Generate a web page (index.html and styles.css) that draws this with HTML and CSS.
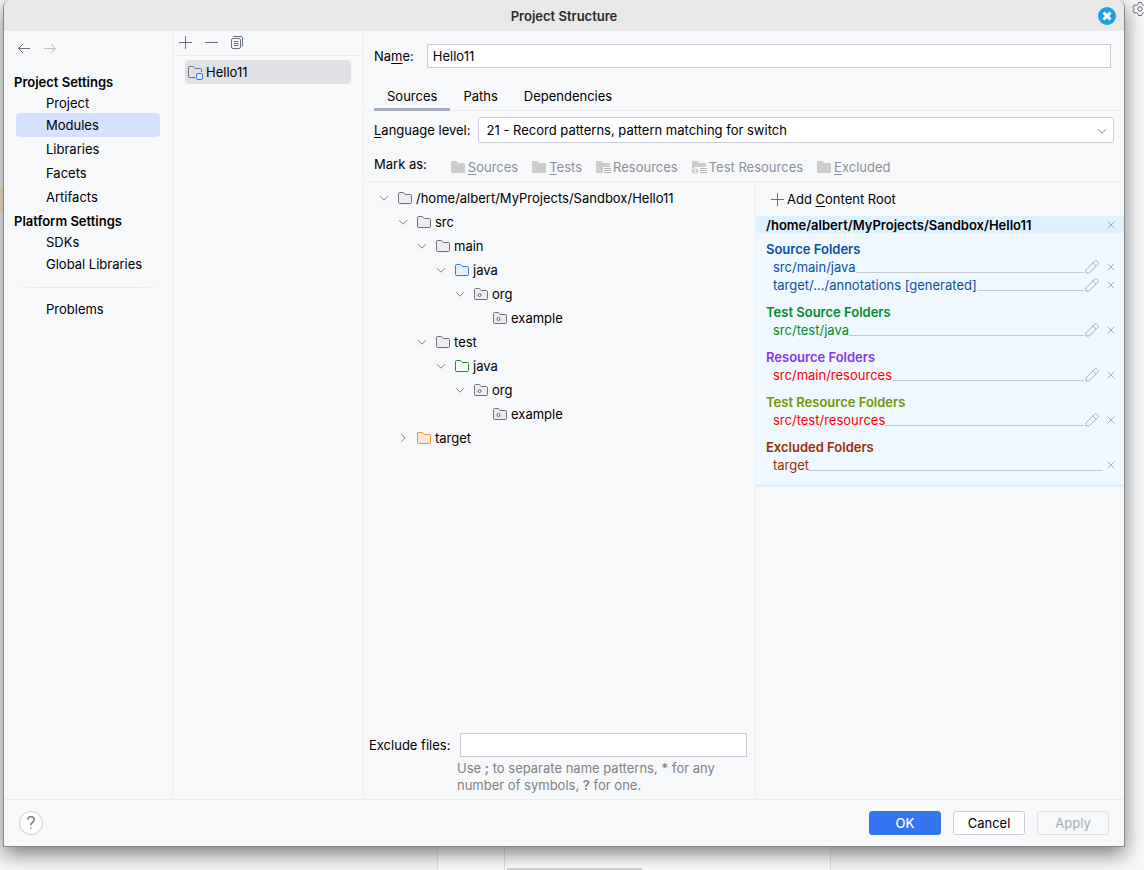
FILE: index.html
```html
<!DOCTYPE html>
<html lang="en">
<head>
    <meta charset="UTF-8">
    <meta name="viewport" content="width=device-width, initial-scale=1.0">
    <title>Project Structure</title>
    <link rel="stylesheet" href="styles.css">
</head>
<body>

<!-- icon set -->
<svg class="sprite" aria-hidden="true">
    <symbol id="folder" viewBox="0 0 16 16">
        <path d="M8.1 4.35l.15.15H13.4c.7 0 1.1.4 1.1 1.1v6.8c0 .7-.4 1.1-1.1 1.1H2.6c-.7 0-1.1-.4-1.1-1.1V3.6c0-.7.4-1.1 1.1-1.1h3.5c.2 0 .3.05.4.16z"/>
    </symbol>
    <symbol id="package" viewBox="0 0 16 16">
        <use href="#folder"/>
        <circle cx="6.5" cy="9" r="1.5"/>
    </symbol>
    <symbol id="folder-solid" viewBox="0 0 16 16">
        <path d="M8.1 4H14q1 0 1 1v8q0 1-1 1H2q-1 0-1-1V3q0-1 1-1h4.2z"/>
    </symbol>
    <symbol id="folder-res" viewBox="0 0 16 16">
        <path d="M8.1 4H14q1 0 1 1v3H8v6H2q-1 0-1-1V3q0-1 1-1h4.2z"/>
        <path class="line" d="M9 9.5h7M9 11.5h7M9 13.5h7"/>
    </symbol>
    <symbol id="folder-testres" viewBox="0 0 16 16">
        <path d="M8.1 4H14q1 0 1 1v3H7L4 8 1 10V3q0-1 1-1h4.2z"/>
        <path d="M3.5 9v6Q.5 14 .5 12t3-3zM4.5 9v6q3-1 3-3t-3-3z"/>
        <path class="line" d="M9 9.5h7M9 11.5h7M9 13.5h7"/>
    </symbol>
    <symbol id="chevron" viewBox="0 0 16 16"><path d="M4 6.2l4 4 4-4"/></symbol>
    <symbol id="plus" viewBox="0 0 16 16"><path d="M8.5 2v13M2 8.5h13"/></symbol>
    <symbol id="cross" viewBox="0 0 16 16"><path d="M4.5 4.5l7 7M11.5 4.5l-7 7"/></symbol>
    <symbol id="pencil" viewBox="0 0 16 16">
        <path d="M2 14v-3.2L10.8 2q.9-.8 1.8 0l1.4 1.4q.8.9 0 1.8L5.2 14zM8.8 4l3.2 3.2"/>
    </symbol>
</svg>

<div class="edge-left"></div>

<div class="dialog">
    <div class="titlebar">
        <h1>Project Structure</h1>
        <button class="close" aria-label="Close">
            <svg viewBox="0 0 18 18"><circle cx="9" cy="9" r="9"/><path d="M5.5 5.5l7 7M12.5 5.5l-7 7"/></svg>
        </button>
    </div>

    <div class="content">
        <nav class="sidebar">
            <div class="history">
                <button aria-label="Back"><svg class="icon" viewBox="0 0 16 16"><path d="M14 8.5H2.5M7 4L2.5 8.5 7 13"/></svg></button>
                <button aria-label="Forward" disabled><svg class="icon" viewBox="0 0 16 16"><path d="M2 8.5h11.5M9 4l4.5 4.500L9 13"/></svg></button>
            </div>
            <h2>Project Settings</h2>
            <a href="#" class="first">Project</a>
            <a href="#" class="selected">Modules</a>
            <a href="#">Libraries</a>
            <a href="#">Facets</a>
            <a href="#">Artifacts</a>
            <h2>Platform Settings</h2>
            <a href="#" class="first">SDKs</a>
            <a href="#">Global Libraries</a>
            <hr>
            <a href="#">Problems</a>
        </nav>

        <div class="modules">
            <div class="toolbar">
                <button aria-label="Add"><svg class="icon"><use href="#plus"/></svg></button>
                <button aria-label="Remove"><svg class="icon" viewBox="0 0 16 16"><path d="M2 8.5h13"/></svg></button>
                <button aria-label="Copy">
                    <svg class="icon" viewBox="0 0 16 16">
                        <rect x="2.5" y="4.5" width="9" height="10" rx="1.5"/>
                        <path d="M4.5 2.5H12q1.5 0 1.5 1.5v8.5M5 7.5h4.500M5 9.5h4.500M5 11.5h4.500"/>
                    </svg>
                </button>
            </div>
            <a href="#" class="module">
                <svg class="icon" viewBox="0 0 16 16">
                    <path d="M8 13.5H2.6q-1.1 0-1.1-1.1V3.6q0-1.1 1.1-1.1h3.5l2 2h5.3q1.1 0 1.1 1.1V8"/>
                    <rect class="badge" x="9.5" y="9.5" width="6" height="6" rx="1.5"/>
                </svg>
                Hello11
            </a>
        </div>

        <div class="editor">
            <div class="name-row">
                <label for="name">Na<u>m</u>e:</label>
                <input type="text" id="name" value="Hello11">
            </div>
            <div class="tabs" role="tablist">
                <button role="tab" class="active" aria-selected="true">Sources</button>
                <button role="tab">Paths</button>
                <button role="tab">Dependencies</button>
            </div>
            <div class="level-row">
                <label for="level"><u>L</u>anguage level:</label>
                <div class="combo">
                    <select id="level">
                        <option>21 - Record patterns, pattern matching for switch</option>
                    </select>
                    <svg class="icon"><use href="#chevron"/></svg>
                </div>
            </div>
            <div class="mark-row">
                <span>Mark as:</span>
                <div class="marks">
                    <button disabled><svg class="icon"><use href="#folder-solid"/></svg><span><u>S</u>ources</span></button>
                    <button disabled><svg class="icon"><use href="#folder-solid"/></svg><span><u>T</u>ests</span></button>
                    <button disabled><svg class="icon"><use href="#folder-res"/></svg><span>Resources</span></button>
                    <button disabled><svg class="icon"><use href="#folder-testres"/></svg><span>Test Resources</span></button>
                    <button disabled><svg class="icon"><use href="#folder-solid"/></svg><span><u>E</u>xcluded</span></button>
                </div>
            </div>

            <div class="split">
                <div class="tree-pane">
                    <ul class="tree">
                        <li><div class="node"><svg class="icon arrow"><use href="#chevron"/></svg><svg class="icon"><use href="#folder"/></svg>/home/albert/MyProjects/Sandbox/Hello11</div>
                            <ul>
                                <li><div class="node"><svg class="icon arrow"><use href="#chevron"/></svg><svg class="icon"><use href="#folder"/></svg>src</div>
                                    <ul>
                                        <li><div class="node"><svg class="icon arrow"><use href="#chevron"/></svg><svg class="icon"><use href="#folder"/></svg>main</div>
                                            <ul>
                                                <li><div class="node"><svg class="icon arrow"><use href="#chevron"/></svg><svg class="icon blue"><use href="#folder"/></svg>java</div>
                                                    <ul>
                                                        <li><div class="node"><svg class="icon arrow"><use href="#chevron"/></svg><svg class="icon"><use href="#package"/></svg>org</div>
                                                            <ul>
                                                                <li><div class="node leaf"><svg class="icon"><use href="#package"/></svg>example</div></li>
                                                            </ul>
                                                        </li>
                                                    </ul>
                                                </li>
                                            </ul>
                                        </li>
                                        <li><div class="node"><svg class="icon arrow"><use href="#chevron"/></svg><svg class="icon"><use href="#folder"/></svg>test</div>
                                            <ul>
                                                <li><div class="node"><svg class="icon arrow"><use href="#chevron"/></svg><svg class="icon green"><use href="#folder"/></svg>java</div>
                                                    <ul>
                                                        <li><div class="node"><svg class="icon arrow"><use href="#chevron"/></svg><svg class="icon"><use href="#package"/></svg>org</div>
                                                            <ul>
                                                                <li><div class="node leaf"><svg class="icon"><use href="#package"/></svg>example</div></li>
                                                            </ul>
                                                        </li>
                                                    </ul>
                                                </li>
                                            </ul>
                                        </li>
                                    </ul>
                                </li>
                                <li><div class="node"><svg class="icon arrow closed"><use href="#chevron"/></svg><svg class="icon orange"><use href="#folder"/></svg>target</div></li>
                            </ul>
                        </li>
                    </ul>
                    <div class="exclude">
                        <label for="exclude">Exclude files:</label>
                        <input type="text" id="exclude">
                    </div>
                    <p class="hint">Use <b>;</b> to separate name patterns, <b>*</b> for any number of symbols, <b>?</b> for one.</p>
                </div>

                <div class="roots">
                    <button class="add-root"><svg class="icon"><use href="#plus"/></svg><span>Add <u>C</u>ontent Root</span></button>
                    <div class="root-title">
                        <h3>/home/albert/MyProjects/Sandbox/Hello11</h3>
                        <button aria-label="Remove content root"><svg class="icon"><use href="#cross"/></svg></button>
                    </div>
                    <div class="root-body">
                        <section class="sources">
                            <h4>Source Folders</h4>
                            <div class="entry">src/main/java<i></i>
                                <button aria-label="Edit"><svg class="icon"><use href="#pencil"/></svg></button>
                                <button aria-label="Remove"><svg class="icon"><use href="#cross"/></svg></button>
                            </div>
                            <div class="entry">target/.../annotations [generated]<i></i>
                                <button aria-label="Edit"><svg class="icon"><use href="#pencil"/></svg></button>
                                <button aria-label="Remove"><svg class="icon"><use href="#cross"/></svg></button>
                            </div>
                        </section>
                        <section class="tests">
                            <h4>Test Source Folders</h4>
                            <div class="entry">src/test/java<i></i>
                                <button aria-label="Edit"><svg class="icon"><use href="#pencil"/></svg></button>
                                <button aria-label="Remove"><svg class="icon"><use href="#cross"/></svg></button>
                            </div>
                        </section>
                        <section class="resources">
                            <h4>Resource Folders</h4>
                            <div class="entry missing">src/main/resources<i></i>
                                <button aria-label="Edit"><svg class="icon"><use href="#pencil"/></svg></button>
                                <button aria-label="Remove"><svg class="icon"><use href="#cross"/></svg></button>
                            </div>
                        </section>
                        <section class="test-resources">
                            <h4>Test Resource Folders</h4>
                            <div class="entry missing">src/test/resources<i></i>
                                <button aria-label="Edit"><svg class="icon"><use href="#pencil"/></svg></button>
                                <button aria-label="Remove"><svg class="icon"><use href="#cross"/></svg></button>
                            </div>
                        </section>
                        <section class="excluded">
                            <h4>Excluded Folders</h4>
                            <div class="entry">target<i></i>
                                <button aria-label="Remove"><svg class="icon"><use href="#cross"/></svg></button>
                            </div>
                        </section>
                    </div>
                </div>
            </div>
        </div>
    </div>

    <div class="footer">
        <button class="help" aria-label="Help">
            <svg viewBox="0 0 24 24"><path d="M8.5 8.5q0-3.5 3.5-3.5t3.5 3.3c0 3-3.8 3-3.8 6.2M11.7 17v1.2"/></svg>
        </button>
        <button class="btn primary">OK</button>
        <button class="btn">Cancel</button>
        <button class="btn" disabled>Apply</button>
    </div>
</div>

<div class="edge-right">
    <svg class="icon" viewBox="0 0 16 16">
        <path d="M6.5 1.5h3l.6 2 1.5.9 2-.5 1.5 2.6-1.5 1.5 1.5 1.5-1.5 2.6-2-.5-1.5.9-.6 2h-3l-.6-2-1.5-.9-2 .5L.9 9.5 2.4 8 .9 6.5l1.5-2.6 2 .5 1.5-.9z"/>
        <circle cx="8" cy="8" r="2.2"/>
    </svg>
</div>

<!-- the IDE window that shows below the dialog -->
<div class="backdrop">
    <div></div>
    <div class="gutter"></div>
    <div class="code"><span></span></div>
    <div></div>
</div>

</body>
</html>
```
FILE: styles.css
```css
* {
    box-sizing: border-box;
}

body {
    margin: 0;
    min-height: 100vh;
    display: grid;
    grid-template-columns: 3px 1fr 19px;
    grid-template-rows: 1fr 23px;
    overflow: hidden;
    background: #f7f8fa;
    color: #000;
    font-family: Inter, "Liberation Sans", sans-serif;
    font-size: 13px;
    line-height: 18px;
}

h1, h2, h3, h4, p, ul {
    margin: 0;
    padding: 0;
    font-size: 13px;
}

h1, h2, h3, h4, b {
    font-weight: 600;
}

ul {
    list-style: none;
}

a {
    color: inherit;
    text-decoration: none;
}

u {
    text-underline-offset: 2px;
}

button {
    margin: 0;
    padding: 0;
    border: 0;
    background: none;
    color: inherit;
    font: inherit;
}

input, select {
    min-width: 0;
    margin: 0;
    border: 1px solid #c9ccd6;
    background: #fff;
    color: #000;
    font: inherit;
}

input {
    flex: 1;
    height: 24px;
    padding: 0 5px 1px;
}

.sprite {
    display: none;
}

.icon {
    display: block;
    flex: none;
    width: 16px;
    height: 16px;
    fill: none;
    stroke: #6c707e;
}

/* surroundings */
.edge-left {
    background: linear-gradient(#f7f8fa 188px, #fff0c8 188px, #fff0c8 212px, #f7f8fa 212px);
}

.edge-right {
    padding: 1px 0 0 7px;
    overflow: hidden;
}

.backdrop {
    grid-column: 1 / 4;
    display: grid;
    grid-template-columns: 437px 67px 1fr 313px;
}

.gutter, .code {
    background: #fff;
    border-left: 1px solid #e3e4ea;
}

.code {
    display: flex;
    align-items: flex-end;
    padding-left: 2px;
    border-right: 1px solid #e3e4ea;
}

.code span {
    width: 135px;
    height: 2px;
    background: #d5d5d5;
}

/* dialog */
.dialog {
    position: relative;
    z-index: 1;
    display: flex;
    flex-direction: column;
    border: 1px solid #858585;
    border-top: 0;
    border-radius: 8px 8px 0 0;
    background: #f7f8fa;
    box-shadow: 0 7px 20px rgba(0, 0, 0, 0.5);
}

.titlebar {
    display: flex;
    align-items: center;
    height: 31px;
    padding: 0 8px 0 26px;
    border-radius: 7px 7px 0 0;
    background: #e8e8e8;
    color: #2b2b2b;
}

.titlebar h1 {
    flex: 1;
    text-align: center;
}

.close svg {
    display: block;
    width: 18px;
    height: 18px;
    fill: #1e9fe0;
    stroke: #fff;
    stroke-width: 3px;
}

.close circle {
    stroke: none;
}

.content {
    flex: 1;
    display: grid;
    grid-template-columns: 169px 191px 1fr;
}

/* settings list */
.sidebar {
    padding: 9px 12px;
    border-right: 1px solid #ebecf0;
}

.history {
    display: flex;
    gap: 10px;
    margin-bottom: 14px;
}

.history button:disabled {
    opacity: 0.4;
}

.sidebar h2 {
    margin-left: -2px;
    line-height: 24px;
}

.sidebar a {
    display: block;
    padding-left: 30px;
    border-radius: 4px;
    line-height: 24px;
}

.sidebar .first {
    line-height: 19px;
}

.sidebar .selected {
    background: #d4e2ff;
}

.sidebar hr {
    height: 1px;
    margin: 11px -2px 9px;
    border: 0;
    background: linear-gradient(90deg, transparent, #e6e7eb 20%, #e6e7eb 80%, transparent);
}

/* module list */
.modules {
    border-right: 1px solid #ebecf0;
}

.toolbar {
    display: flex;
    align-items: center;
    gap: 10px;
    height: 25px;
    padding: 0 0 2px 4px;
    border-bottom: 1px solid #ebecf0;
}

.module {
    display: flex;
    align-items: center;
    gap: 3px;
    height: 24px;
    margin: 4px 12px;
    padding-left: 2px;
    border-radius: 4px;
    background: #dfe1e5;
}

.module .badge {
    fill: #e7effd;
    stroke: #3574f0;
}

/* module editor */
.editor {
    display: flex;
    flex-direction: column;
    min-width: 0;
}

.name-row {
    display: flex;
    align-items: center;
    gap: 13px;
    padding: 13px 13px 15px 10px;
}

.tabs {
    display: flex;
    padding-left: 10px;
    border-bottom: 1px solid #ebecf0;
}

.tabs button {
    height: 27px;
    padding: 0 13px 1px;
}

.tabs .active {
    margin-bottom: -1px;
    padding-top: 2px;
    height: 28px;
    border-bottom: 3px solid #a8adbd;
}

.level-row {
    display: flex;
    align-items: center;
    gap: 7px;
    padding: 6px 10px;
}

.combo {
    position: relative;
    flex: 1;
}

.combo select {
    display: block;
    width: 100%;
    height: 26px;
    padding: 0 24px 0 8px;
    border-radius: 3px;
    appearance: none;
}

.combo .icon {
    position: absolute;
    top: 6px;
    right: 4px;
    stroke: #818594;
}

.mark-row {
    display: flex;
    gap: 23px;
    padding: 6px 10px 5px;
    border-bottom: 1px solid #ebecf0;
}

.marks {
    display: flex;
    gap: 13px;
    padding-top: 3px;
}

.marks button {
    display: flex;
    align-items: center;
    gap: 2px;
    color: #8c8f9c;
}

.marks .icon {
    fill: #cdcdcd;
    stroke: none;
}

.line {
    stroke: #b8b8b8;
}

.split {
    flex: 1;
    display: grid;
    grid-template-columns: 392fr 368fr;
}

.tree-pane {
    display: flex;
    flex-direction: column;
    padding: 4px 8px 5px 5px;
    border-right: 1px solid #ebecf0;
}

.tree {
    flex: 1;
    padding-left: 7px;
}

.tree ul {
    padding-left: 19px;
}

.node {
    display: flex;
    align-items: center;
    gap: 3px;
    height: 24px;
}

.node .icon {
    fill: #ebecf0;
}

.node .arrow {
    margin-right: 2px;
    fill: none;
    stroke: #818594;
}

.node .closed {
    transform: rotate(-90deg);
}

.node .blue {
    fill: #e7effd;
    stroke: #3574f0;
}

.node .green {
    fill: #f2fcf3;
    stroke: #208a3c;
}

.node .orange {
    fill: #fce9da;
    stroke: #f28c35;
}

.leaf {
    padding-left: 21px;
}

.exclude {
    display: flex;
    align-items: center;
    gap: 10px;
}

.hint {
    padding: 3px 10px 0 88px;
    color: #818181;
    line-height: 17px;
}

/* content roots */
.add-root {
    display: flex;
    align-items: center;
    gap: 2px;
    height: 34px;
    padding-left: 13px;
}

.root-title {
    display: flex;
    align-items: center;
    justify-content: space-between;
    height: 17px;
    padding: 0 5px 0 10px;
    background: #def1ff;
}

.roots .icon {
    stroke: #a8adbd;
}

.roots .add-root .icon {
    stroke: #6c707e;
}

.root-body {
    display: flex;
    flex-direction: column;
    gap: 9px;
    padding: 7px 5px 10px 10px;
    border-bottom: 3px solid #def1ff;
    background: #f0f8ff;
}

.entry {
    display: flex;
    align-items: center;
    height: 18px;
    padding-left: 7px;
}

.entry button + button {
    margin-left: 3px;
}

.entry i {
    flex: 1;
    height: 12px;
    border-bottom: 1px solid #c4c6c9;
}

.sources { color: #0a50a1; }
.tests { color: #008c2e; }
.resources { color: #8636ee; }
.test-resources { color: #739503; }
.excluded { color: #992e00; }
.missing { color: #ff0000; }

/* dialog buttons */
.footer {
    display: flex;
    align-items: center;
    gap: 12px;
    height: 47px;
    padding: 0 15px;
    border-top: 1px solid #ebecf0;
}

.help {
    margin-right: auto;
}

.help svg {
    display: block;
    width: 24px;
    height: 24px;
    border: 1px solid #c9ccd6;
    border-radius: 50%;
    background: #fff;
    fill: none;
    stroke: #6c707e;
    stroke-width: 1.5px;
}

.btn {
    width: 72px;
    height: 24px;
    border: 1px solid #c9ccd6;
    border-radius: 3px;
    background: #fff;
}

.btn.primary {
    border-color: #3574f0;
    background: #3574f0;
    color: #fff;
    font-weight: 500;
}

.btn:disabled {
    border-color: #dfe1e5;
    background: none;
    color: #a8adbd;
}
```
